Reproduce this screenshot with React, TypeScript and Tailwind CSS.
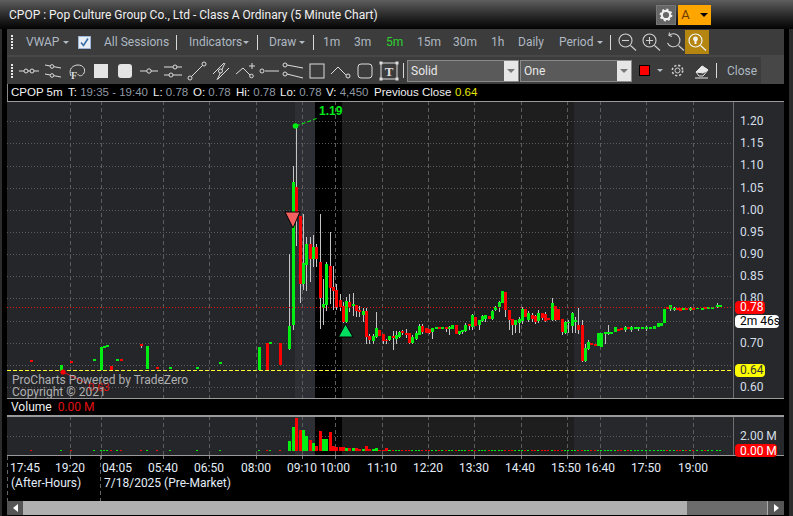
import React from 'react';

type C = [number, number, number, number?, number?];

const green: C[] = [
  [60,366,372],[93,360,362],[100,348,371],[103,347,349],[106,346,348],[116,360,362],[146,347,370],[169,368,370],[196,368,370],[219,363,365],
  [258,348,371],[269,343,345],[288,327,350,255,351],[292,183,326,167,331],[302,264,285,215,291],[305,245,266,238,292],[312,248,260,236,268],
  [322,305,309,280,326],[325,265,306,263,312],[345,302,323,298,324],[352,305,307,294,317],[362,312,316,309,323],[372,337,342,335,345],[375,329,338,313,339],
  [388,337,341,337,342],[395,336,340,332,345],[398,333,338,332,339],[411,338,344,336,345],[415,334,340,332,341],[418,327,336,325,336],[431,329,333,329,340],
  [435,328,330],[441,328,330],[448,328,330,327,336],[451,326,330],[458,332,335,332,336],[461,331,333,331,335],[464,326,332,324,333],[471,316,328,315,331],
  [478,321,326,321,331],[481,317,322,316,323],[484,316,320,316,323],[491,312,320,311,321],[494,308,311,307,312],[498,303,308,302,313],[501,292,304],
  [514,321,326,321,334],[518,320,324,318,334],[521,310,322,308,325],[527,314,321,312,323],[537,314,322,311,324],[551,304,321,299,322],[564,323,334,322,335],
  [567,323,324,321,334],[571,314,327,313,334],[574,321,323,318,334],[584,349,362,345,363],[587,343,350,341,351],[597,334,347],[600,334,348],
  [604,333,335,333,345],[607,333,335,326,336],[610,333,335],[614,328,333],[624,328,331,327,333],[630,328,331,327,333],[634,328,330],[637,328,330,328,332],[641,328,330],[645,328,330,327,332],[649,328,330],[653,327,330],[657,324,328],[660,324,327],
  [663,310,324],[669,306,310,306,312],[673,309,311,308,312],[682,309,311],[689,309,311,308,312],[696,309,310],[701,309,311],[707,308,310],[711,308,310],[716,306,308,304,309],[719,306,308],
];

const red: C[] = [
  [30,361,363],[70,362,364],[110,367,371],[120,360,362],[140,345,347,345,349],[156,368,370],[266,344,371],[279,344,366],
  [295,188,217,127,247],[299,217,285,217,304],[309,245,260,238,283],[315,248,260,245,268],[319,263,299,215,330],[329,267,289,233,305],[332,288,292,267,311],[335,291,308,285,311],
  [339,301,308,295,312],[342,307,323,303,324],[348,303,308,295,313],[355,306,312,306,318],[358,311,313,307,318],[365,312,338,309,345],[368,337,341,335,345],[378,331,337],
  [382,335,342,335,345],[385,341,342,340,345],[392,337,339,332,351],[401,332,334,331,336],[405,334,336,330,339],[408,334,344,334,345],[421,327,333,325,335],[425,329,334],[428,330,334,330,335],
  [438,328,330],[445,328,330,328,333],[455,326,335],[468,325,327,325,331],[474,318,327],[488,317,320],[504,293,311,293,318],[508,311,321,311,331],[511,320,326,320,336],
  [524,310,318],[531,316,320,314,323],[534,317,323,316,325],[541,314,319,314,321],[544,315,322,313,323],[547,319,321],[554,307,321,307,322],[557,310,321],[561,320,333,320,336],
  [577,326,331,309,335],[581,326,362,321,363],[590,344,346],[594,345,347],[617,330,332],[620,329,331],[627,328,330],[666,308,310],[676,309,311],[679,309,312],[685,309,311],[692,309,311],[704,308,310],
];

const vol: Record<number, number> = {
  288:442,292:428,295:419,299:431,302:431,305:437,309:441,312:444,315:447,319:432,322:440,325:440,329:433,332:447,335:448,339:448,342:448,345:449,348:449,352:449,355:449,358:450,362:450,365:447,368:450,372:450,375:449,378:451,382:451,385:449,388:451,
};

const vLines = [70,101,163,209,256,302,335,382,428,474,521,567,600,646,693];
const hLines = [122,144,167,189,211,233,255,277,299,322,344,366,388];
const prices: [string, number][] = [['1.20',122],['1.15',144],['1.10',166],['1.05',189],['1.00',211],['0.95',233],['0.90',255],['0.85',277],['0.80',299],['0.70',344],['0.60',388]];
const times: [string, number][] = [['17:45',25],['19:20',70],['04:05',117],['05:40',163],['06:50',209],['08:00',256],['09:10',302],['10:00',335],['11:10',382],['12:20',428],['13:30',474],['14:40',520],['15:50',566],['16:40',600],['17:50',646],['19:00',693]];

const Bands = ({ y, h }: { y: number; h: number }) => (
  <g>
    <rect x={7} y={y} width={288} height={h} fill="#25262a" />
    <rect x={295} y={y} width={20} height={h} fill="#2e2f34" />
    <rect x={315} y={y} width={27} height={h} fill="#000" />
    <rect x={342} y={y} width={232} height={h} fill="#1e1e1e" />
    <rect x={574} y={y} width={210} height={h} fill="#27282b" />
  </g>
);

const Candle = ({ c, color }: { c: C; color: string }) => (
  <g shapeRendering="crispEdges">
    {c[3] !== undefined && <rect x={c[0] + 1} y={c[3]} width={1} height={(c[4] ?? c[2]) - c[3]} fill="#c4c4c4" />}
    <rect x={c[0]} y={c[1]} width={3} height={c[2] - c[1]} fill={color} />
  </g>
);

const Pill = ({ x, y, w, bg, fg, text }: { x: number; y: number; w: number; bg: string; fg: string; text: string }) => (
  <g>
    <rect x={x} y={y - 6} width={w} height={13} rx={4} fill={bg} />
    <text x={x + 5} y={y + 4} fontSize={12} fill={fg}>{text}</text>
  </g>
);

const MainChart = () => (
  <svg className="block overflow-visible" width={777} height={297} viewBox="7 102 777 297" fontFamily="Roboto, sans-serif">
    <Bands y={102} h={297} />
    <g shapeRendering="crispEdges">
      {hLines.map(y => <line key={y} x1={7} x2={733} y1={y + 0.5} y2={y + 0.5} stroke="#5a5a5a" strokeDasharray="1 2" />)}
      {vLines.map(x => <line key={x} x1={x + 0.5} x2={x + 0.5} y1={102} y2={399} stroke="#5c5c5c" strokeDasharray="4 3" />)}
      <line x1={733.5} x2={733.5} y1={102} y2={399} stroke="#6e6e6e" />
      <line x1={7} x2={784} y1={102.5} y2={102.5} stroke="#9a9a9a" />
    </g>
    {red.map((c, i) => <Candle key={i} c={c} color="#ff0000" />)}
    {green.map((c, i) => <Candle key={i} c={c} color="#00ee11" />)}
    <g shapeRendering="crispEdges">
      <line x1={7} x2={733} y1={308.5} y2={308.5} stroke="#e81010" strokeDasharray="1 2" />
      <line x1={7} x2={733} y1={371.5} y2={371.5} stroke="#ffff33" strokeDasharray="4 2" />
    </g>
    <polygon points="285,213 300,213 293,229" fill="#f46060" stroke="#000" />
    <polygon points="345.5,325 353,338 338.5,338" fill="#00e060" stroke="#000" />
    <circle cx={295.5} cy={127} r={2.8} fill="#00ee11" />
    <line x1={296} x2={318} y1={127} y2={119} stroke="#00ee11" strokeDasharray="4 2" />
    <text x={319} y={116} fontSize={12} fontWeight={700} fill="#00e81a" fontFamily="'Liberation Sans', sans-serif">1.19</text>
    <circle cx={63} cy={373} r={2.6} fill="#ff0000" />
    <line x1={63} x2={86} y1={373} y2={384} stroke="#e01010" />
    <text x={88} y={392} fontSize={11} fill="#e01010" fontFamily="'Liberation Sans', sans-serif">0.63</text>
    <text x={12} y={385} fontSize={12} fill="#b0b0b0">ProCharts Powered by TradeZero</text>
    <text x={12} y={397} fontSize={12} fill="#b0b0b0">Copyright © 2021</text>
    {prices.map(([t, y]) => <text key={t} x={740} y={y + 4} fontSize={12} fill="#d4dfea">{t}</text>)}
    <Pill x={735} y={308} w={30} bg="#ff0000" fg="#fff" text="0.78" />
    <Pill x={735} y={322} w={44} bg="#fff" fg="#000" text="2m 46s" />
    <Pill x={735} y={371} w={30} bg="#ffff00" fg="#333" text="0.64" />
  </svg>
);

const VolumeChart = () => (
  <svg className="block overflow-visible" width={777} height={40} viewBox="7 417 777 40" fontFamily="Roboto, sans-serif">
    <Bands y={417} h={40} />
    <g shapeRendering="crispEdges">
      <line x1={7} x2={733} y1={437.5} y2={437.5} stroke="#5a5a5a" strokeDasharray="1 2" />
      {vLines.map(x => <line key={x} x1={x + 0.5} x2={x + 0.5} y1={417} y2={457} stroke="#5c5c5c" strokeDasharray="4 3" />)}
      <line x1={733.5} x2={733.5} y1={417} y2={457} stroke="#6e6e6e" />
      <line x1={7} x2={784} y1={417.5} y2={417.5} stroke="#9a9a9a" />
      <line x1={7} x2={784} y1={456.5} y2={456.5} stroke="#9a9a9a" />
      {red.map((c, i) => <rect key={i} x={c[0]} y={vol[c[0]] ?? 451} width={vol[c[0]] ? 3 : 2} height={452 - (vol[c[0]] ?? 451)} fill="#ff0000" />)}
      {green.map((c, i) => <rect key={i} x={c[0]} y={vol[c[0]] ?? 451} width={vol[c[0]] ? 3 : 2} height={452 - (vol[c[0]] ?? 451)} fill="#00ee11" />)}
    </g>
    <text x={740} y={441} fontSize={12} fill="#d4dfea">2.00 M</text>
    <rect x={735} y={445} width={42} height={13} rx={4} fill="#ff0000" />
    <text x={740} y={456} fontSize={12} fill="#fff">0.00 M</text>
  </svg>
);

const TimeAxis = () => (
  <svg className="block" width={777} height={45} viewBox="7 457 777 45" fontFamily="Roboto, sans-serif">
    <g shapeRendering="crispEdges">
      {vLines.map(x => <line key={x} x1={x + 0.5} x2={x + 0.5} y1={457} y2={460} stroke="#777" />)}
      <line x1={7.5} x2={7.5} y1={457} y2={502} stroke="#666" strokeDasharray="4 3" />
      <line x1={100.5} x2={100.5} y1={457} y2={502} stroke="#666" strokeDasharray="4 3" />
    </g>
    {times.map(([t, x]) => <text key={t} x={x} y={473} fontSize={12} textAnchor="middle" fill="#e4eef8">{t}</text>)}
    <text x={11} y={488} fontSize={12} fill="#e4eef8">(After-Hours)</text>
    <text x={104} y={488} fontSize={12} fill="#e4eef8">7/18/2025 (Pre-Market)</text>
  </svg>
);

const Caret = ({ cls = '' }: { cls?: string }) => (
  <span className={`${cls} inline-block h-0 w-0 border-x-[3.5px] border-t-[3.5px] border-x-transparent border-t-[#b4bcc6]`} />
);
const Sep = ({ cls }: { cls: string }) => <span className={`${cls} h-[15px] w-px bg-[#d8d8d8]`} />;
const Grip = () => (
  <span className="ml-[4px] h-[14px] w-[2px] bg-[repeating-linear-gradient(to_bottom,#e8e8e8_0,#e8e8e8_2px,transparent_2px,transparent_3px)]" />
);

const Magnifier = ({ children }: { children?: React.ReactNode }) => (
  <svg width={20} height={20} viewBox="0 0 20 20" fill="none" stroke="#d0d0d0" strokeWidth={1.1}>
    {children}
    <line x1={13.5} y1={13.5} x2={19} y2={18.5} />
  </svg>
);

const tools: React.ReactNode[] = [
  <><path d="M2 12h20" /><circle cx={9} cy={12} r={2} fill="#3c3c3c" /><circle cx={15} cy={12} r={2} fill="#3c3c3c" /></>,
  <><path d="M4 6l16 3M4 15l16 3" /><circle cx={11} cy={7.5} r={1.8} fill="#3c3c3c" /><circle cx={11} cy={16.5} r={1.8} fill="#3c3c3c" /></>,
  <><path d="M6 17C3 10 8 6 13 6s8 4 6 8-6 3-6 1" /><text x={6} y={20} fontSize={10} fontWeight={700} fill="#ddd" stroke="none" fontFamily="'Liberation Serif', serif">F</text></>,
  <rect x={5} y={5} width={14} height={14} fill="#e4e4e4" stroke="none" />,
  <rect x={5} y={5} width={14} height={14} rx={3} fill="#e4e4e4" stroke="none" />,
  <><path d="M3 12h18" /><circle cx={12} cy={12} r={2.2} fill="#3c3c3c" /></>,
  <><path d="M3 8h18M3 16h18" /><circle cx={14} cy={8} r={2} fill="#3c3c3c" /><circle cx={10} cy={16} r={2} fill="#3c3c3c" /></>,
  <><path d="M6 18L18 6" /><circle cx={5} cy={19} r={2} fill="#3c3c3c" /><circle cx={19} cy={5} r={2} fill="#3c3c3c" /></>,
  <><path d="M4 15L15 4M9 20L20 9" /><path d="M8 21L16 4" /><circle cx={11.5} cy={12} r={2} fill="#3c3c3c" /></>,
  <><path d="M3 15l7-6 8 8" /><circle cx={18.5} cy={17} r={1.8} fill="#3c3c3c" /><path d="M19 4v6M16 7h6" /></>,
  <><path d="M8 12h14" /><circle cx={5} cy={12} r={2} fill="#3c3c3c" /></>,
  <><path d="M6 6l16 3M6 15l16 4" /><circle cx={4} cy={6} r={2} fill="#3c3c3c" /><circle cx={4} cy={15} r={2} fill="#3c3c3c" /></>,
  <rect x={5} y={5} width={14} height={14} />,
  <><path d="M2 15l7-7 8 8" /><circle cx={19} cy={17} r={2} fill="#3c3c3c" /></>,
  <rect x={5} y={5} width={14} height={14} rx={3} />,
  <><rect x={4} y={4} width={16} height={16} /><rect x={3} y={3} width={2} height={2} fill="#ddd" /><rect x={19} y={3} width={2} height={2} fill="#ddd" /><rect x={3} y={19} width={2} height={2} fill="#ddd" /><rect x={19} y={19} width={2} height={2} fill="#ddd" /><text x={12} y={17} fontSize={13} fontWeight={700} textAnchor="middle" fill="#ddd" stroke="none" fontFamily="'Liberation Serif', serif">T</text></>,
];

const Select = ({ label }: { label: string }) => (
  <div className="flex h-[22px] w-[112px] border border-[#8a8a8a] bg-[#5a5a5a]">
    <span className="flex-1 pl-[3px] text-[12px] leading-[20px] text-[#e8e8e8]">{label}</span>
    <span className="flex w-[14px] items-center justify-center bg-[#e6e6e6]">
      <span className="h-0 w-0 border-x-[4px] border-t-[4px] border-x-transparent border-t-[#777]" />
    </span>
  </div>
);

const Info = ({ label, value, cls }: { label: string; value: string; cls: string }) => (
  <span className={cls}>
    <span className="text-[#f0f0f0]">{label}</span> <span className="text-[#8f99a3]">{value}</span>
  </span>
);

export default function App() {
  return (
    <div className="flex h-[516px] w-[793px] flex-col overflow-hidden bg-black font-['Roboto',sans-serif]">
      {/* title bar */}
      <div className="flex h-[29px] shrink-0 items-center bg-gradient-to-b from-[#5e5e5e] to-[#050505] pl-[9px]">
        <span className="text-[12px] text-[#f0f0f0]">CPOP : Pop Culture Group Co., Ltd - Class A Ordinary (5 Minute Chart)</span>
        <div className="ml-auto mr-[82px] flex items-center gap-[2px]">
          <span className="flex h-[20px] w-[20px] items-center justify-center border border-[#777] bg-[#666]">
            <svg width={14} height={14} viewBox="0 0 14 14">
              <circle cx={7} cy={7} r={4.2} fill="none" stroke="#f0f0f0" strokeWidth={2.2} />
              <circle cx={7} cy={7} r={5.4} fill="none" stroke="#f0f0f0" strokeWidth={2} strokeDasharray="2 2.2" />
            </svg>
          </span>
          <span className="flex h-[20px] w-[33px] items-center justify-center gap-[10px] bg-[#ffa500] text-[13px] text-[#6b3a00]">
            A
            <span className="h-0 w-0 border-x-[4px] border-t-[4px] border-x-transparent border-t-black" />
          </span>
        </div>
      </div>

      <div className="flex flex-1">
        <div className="w-[7px] border-l-2 border-[#2c2c2c]" />
        <div className="flex w-[777px] flex-col">
          <div className="bg-[#474747]">
            {/* top toolbar */}
            <div className="flex h-[26px] items-center whitespace-nowrap bg-[#3c3c3c] text-[12px] text-[#aeb8c2]">
              <Grip />
              <span className="ml-[13px] w-[36px]">VWAP</span>
              <Caret cls="ml-[1px]" />
              <span className="ml-[9px] flex h-[13px] w-[13px] items-center justify-center border border-[#9db6d6] bg-[#e8eef6]">
                <svg width={11} height={11} viewBox="0 0 11 11" fill="none" stroke="#3a6ea5" strokeWidth={1.6}><path d="M2 5.5l2.5 3L9 1.5" /></svg>
              </span>
              <span className="ml-[13px] w-[72px]">All Sessions</span>
              <Sep cls="" />
              <span className="ml-[12px] w-[54px]">Indicators</span>
              <Caret />
              <Sep cls="ml-[8px]" />
              <span className="ml-[11px] w-[30px]">Draw</span>
              <Caret />
              <Sep cls="ml-[8px]" />
              <span className="ml-[9px] w-[31px]">1m</span>
              <span className="w-[32px]">3m</span>
              <span className="w-[31px] text-[#2fcf2f]">5m</span>
              <span className="w-[36px]">15m</span>
              <span className="w-[38px]">30m</span>
              <span className="w-[27px]">1h</span>
              <span className="w-[41px]">Daily</span>
              <span className="w-[38px]">Period</span>
              <Caret />
              <Sep cls="ml-[7px]" />
              <span className="ml-[6px] flex items-center gap-[4px]">
                <Magnifier><circle cx={8.5} cy={8.5} r={6.5} /><path d="M5 8.5h7" /></Magnifier>
                <Magnifier><circle cx={8.5} cy={8.5} r={6.5} /><path d="M5 8.5h7M8.5 5v7" /></Magnifier>
                <Magnifier><path d="M4 3.5A6.5 6.5 0 1 1 2.5 11" /><path d="M4.5 0.5L4 3.5L7 4.5" /></Magnifier>
              </span>
              <span className="flex h-[24px] w-[24px] items-center justify-center bg-[#b5860f]">
                <svg width={20} height={20} viewBox="0 0 20 20" fill="none" stroke="#f4f4f4" strokeWidth={1.2}>
                  <circle cx={8.5} cy={8.5} r={6.5} />
                  <line x1={13.5} y1={13.5} x2={19} y2={18.5} />
                  <circle cx={8.5} cy={7} r={1.8} fill="#f4f4f4" />
                  <path d="M8.5 8v4" strokeWidth={2} />
                </svg>
              </span>
            </div>
            {/* drawing toolbar */}
            <div className="mt-[2px] flex h-[27px] w-[754px] items-center bg-[#3c3c3c]">
              <Grip />
              <div className="ml-[4px] flex">
                {tools.map((t, i) => (
                  <svg key={i} className="shrink-0" width={24} height={24} viewBox="0 0 24 24" fill="none" stroke="#dcdcdc" strokeWidth={1}>{t}</svg>
                ))}
              </div>
              <Sep cls="ml-[2px]" />
              <div className="ml-[3px] flex">
                <Select label="Solid" />
                <span className="w-[1px]" />
                <Select label="One" />
              </div>
              <span className="ml-[7px] h-[11px] w-[11px] border border-black bg-[#ff0000]" />
              <Caret cls="ml-[7px]" />
              <svg className="ml-[7px]" width={15} height={15} viewBox="0 0 15 15" fill="none" stroke="#cfcfcf">
                <circle cx={7.5} cy={7.5} r={2.5} />
                <circle cx={7.5} cy={7.5} r={5.2} strokeWidth={1.6} strokeDasharray="2.2 1.9" />
              </svg>
              <svg className="ml-[9px]" width={16} height={16} viewBox="0 0 16 16" fill="none" stroke="#e8e8e8">
                <path d="M2 9l6-6 6 4-5 6H5z" />
                <path d="M2 9l6-6 6 4-5 3z" fill="#e8e8e8" />
                <path d="M1 15h13" />
              </svg>
              <Sep cls="ml-[6px]" />
              <span className="ml-[10px] text-[12px] text-[#aeb8c2]">Close</span>
            </div>
          </div>

          {/* quote strip */}
          <div className="flex h-[17px] items-center whitespace-nowrap border-l border-[#8a8a8a] pl-[3px] font-['Liberation_Sans',sans-serif] text-[11.5px]">
            <span className="w-[57px] text-[#f4f4f4]">CPOP 5m</span>
            <Info cls="w-[85px]" label="T:" value="19:35 - 19:40" />
            <Info cls="w-[40px]" label="L:" value="0.78" />
            <Info cls="w-[43px]" label="O:" value="0.78" />
            <Info cls="w-[44px]" label="Hi:" value="0.78" />
            <Info cls="w-[46px]" label="Lo:" value="0.78" />
            <Info cls="w-[48px]" label="V:" value="4,450" />
            <span className="w-[81px] text-[#f0f0f0]">Previous Close</span>
            <span className="text-[#e6e600]">0.64</span>
          </div>

          <MainChart />

          {/* volume strip */}
          <div className="flex h-[18px] items-center border-y border-[#9a9a9a] pl-[4px] text-[12px]">
            <span className="text-[#f0f0f0]">Volume</span>
            <span className="ml-[6px] text-[#e01010]">0.00 M</span>
          </div>

          <VolumeChart />
          <TimeAxis />

          {/* scrollbar */}
          <div className="flex h-[14px] bg-[#b0b0b0]">
            <span className="flex w-[16px] items-center justify-center bg-[#555]">
              <span className="h-0 w-0 border-y-[4px] border-r-[5px] border-y-transparent border-r-white" />
            </span>
            <span className="ml-auto w-[80px] bg-[#6c6c6c]" />
            <span className="flex w-[17px] items-center justify-center border-l border-[#aaa] bg-[#555]">
              <span className="h-0 w-0 border-y-[4px] border-l-[5px] border-y-transparent border-l-white" />
            </span>
          </div>
        </div>
        <div className="flex-1 bg-black pl-[5px]"><div className="h-full bg-[#2c2c2c]" /></div>
      </div>
    </div>
  );
}
